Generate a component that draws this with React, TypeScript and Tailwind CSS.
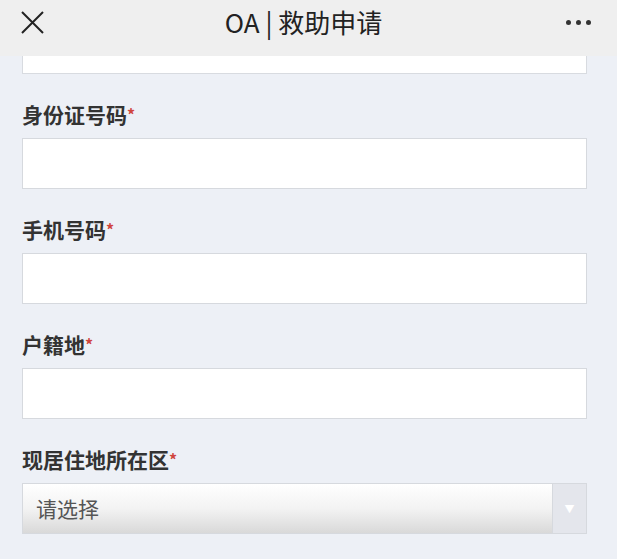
const FIELDS = ["身份证号码", "手机号码", "户籍地"];

function Label({ text }: { text: string }) {
  return (
    <div className="h-[64px] flex items-end pb-[11px] text-[21px] leading-[26px] font-bold text-[#333]">
      {text}
      <span className="text-[#d0453e] text-[16px] self-start mt-[27px]">*</span>
    </div>
  );
}

export default function App() {
  return (
    <div
      className="w-[617px] h-[559px] overflow-hidden bg-[#edf0f6] flex flex-col"
      style={{ fontFamily: "'Noto Sans CJK SC', 'Noto Sans', sans-serif" }}
    >
      {/* header */}
      <div className="h-[56px] shrink-0 bg-[#efefef] flex items-center justify-between pl-[21px] pr-[26px] relative">
        <svg width="23" height="23" viewBox="0 0 23 23" className="-mt-[12px]">
          <path d="M1 1L22 22M22 1L1 22" stroke="#222" strokeWidth="2" />
        </svg>
        <div className="absolute inset-x-0 top-[2px] pr-[10px] text-center text-[26px] text-[#222]">OA | 救助申请</div>
        <div className="flex gap-[5px] -mt-[12px]">
          <span className="w-[5px] h-[5px] rounded-full bg-[#333]" />
          <span className="w-[5px] h-[5px] rounded-full bg-[#333]" />
          <span className="w-[5px] h-[5px] rounded-full bg-[#333]" />
        </div>
      </div>

      <div className="px-[22px] pr-[30px]">
        <div className="h-[18px] bg-white border border-[#d8dbe0] border-t-0" />
        {FIELDS.map((f) => (
          <div key={f}>
            <Label text={f} />
            <div className="h-[51px] bg-white border border-[#d6d9de]" />
          </div>
        ))}
        <div>
          <Label text="现居住地所在区" />
          <div className="h-[51px] flex border border-[#d6d9de]">
            <div className="flex-1 flex items-center pl-[13px] text-[21px] text-[#555] bg-gradient-to-b from-white via-[#f3f3f3] to-[#d9d9d9]">
              请选择
            </div>
            <div className="w-[34px] bg-[#e4e6ec] border-l border-[#d6d9de] flex items-center justify-center">
              <span className="text-[10px] text-white">▼</span>
            </div>
          </div>
        </div>
      </div>
    </div>
  );
}
